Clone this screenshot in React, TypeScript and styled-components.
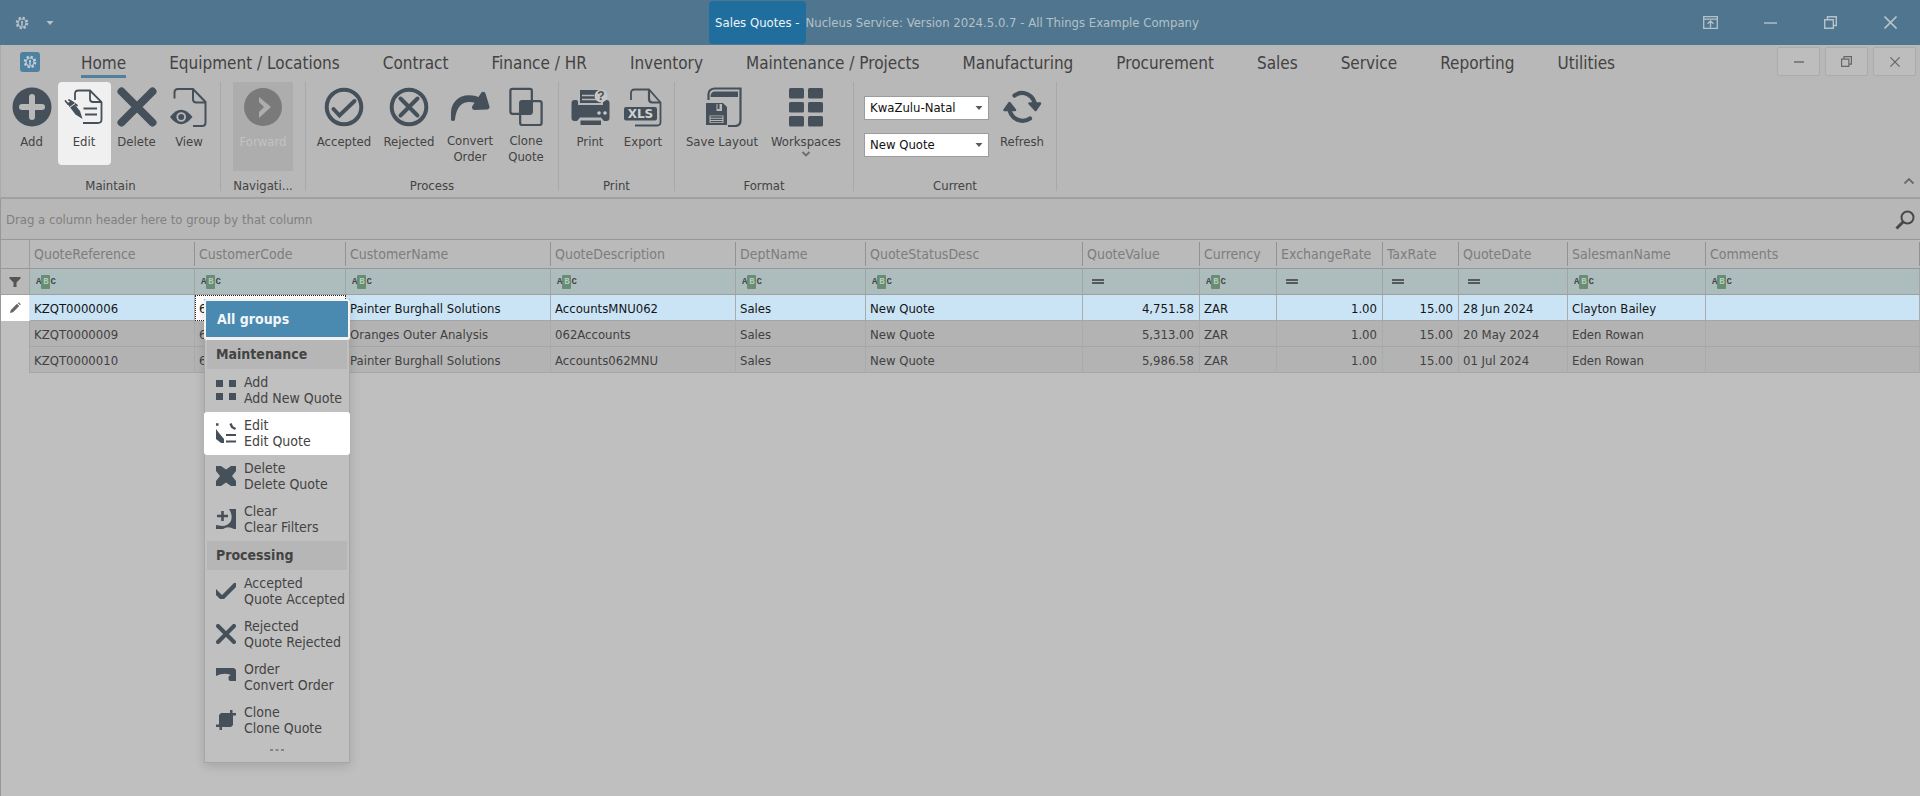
import React from "react";
import styled, { createGlobalStyle, css } from "styled-components";

const ink = "#46505a";
const ribbonBg = "#b8b8b8";

const GlobalStyle = createGlobalStyle`
  * { box-sizing: border-box; }
  html, body { margin: 0; background: #bfbfbf; }
  body, button, input, select {
    font-family: "DejaVu Sans Condensed", "DejaVu Sans", Tahoma, sans-serif;
    font-size: 13px;
    line-height: 16px;
    color: #434343;
  }
  button { border: 0; padding: 0; background: none; cursor: pointer; }
`;

const Window = styled.div`
  display: flex;
  flex-direction: column;
  min-height: 100vh;
`;

/* ---------- Title bar ---------- */

const TitleBar = styled.header`
  display: grid;
  grid-template-columns: 1fr auto 1fr;
  align-items: center;
  height: 45px;
  background: #50768f;
  color: #b4c0c8;
`;

const QuickAccess = styled.div`
  display: flex;
  align-items: center;
  gap: 17px;
  padding-left: 15px;
`;

const QuickButton = styled.button`
  display: flex;
  color: #b9c3ca;
`;

const Title = styled.h1`
  display: flex;
  align-items: center;
  margin: 0;
  padding-right: 12px;
  font-size: 13px;
  font-weight: 400;
  white-space: pre;
`;

const TitleDocument = styled.span`
  padding: 14px 6px 13px 6px;
  border-radius: 4px;
  background: #206e9e;
  color: #eef4f8;
`;

const WindowButtons = styled.div`
  display: flex;
  justify-content: flex-end;
`;

const WindowButton = styled.button`
  display: grid;
  place-items: center;
  width: 60px;
  height: 44px;
  color: #b6c2ca;
`;

/* ---------- Tabs ---------- */

const TabRow = styled.div`
  display: flex;
  align-items: flex-start;
  height: 37px;
  padding: 0 4px 0 20px;
  background: ${ribbonBg};
  border-left: 1px solid #ababab;
`;

const AppButton = styled.button`
  display: grid;
  place-items: center;
  width: 20px;
  height: 20px;
  margin: 7px 41px 0 -1px;
  border-radius: 3px;
  background: #50809f;
  color: #c3d0d8;
`;

const Tabs = styled.nav`
  display: flex;
  flex: 1;
  gap: 43px;
  padding-top: 8px;
`;

const Tab = styled.button<{ $active?: boolean }>`
  height: 25px;
  font-size: 17px;
  line-height: 20px;
  padding-bottom: 2px;
  white-space: nowrap;
  border-bottom: 3px solid ${(p) => (p.$active ? "#50809c" : "transparent")};
`;

const ChildButtons = styled.div`
  display: flex;
  gap: 5px;
  padding-top: 2px;
`;

const ChildButton = styled.button`
  display: grid;
  place-items: center;
  width: 43px;
  height: 29px;
  border: 1px solid #ababab;
  border-radius: 2px;
  background: #bdbdbd;
  color: #666;
`;

/* ---------- Ribbon ---------- */

const Ribbon = styled.section`
  display: flex;
  height: 117px;
  padding-bottom: 6px;
  background: ${ribbonBg};
  border-left: 1px solid #ababab;
  border-bottom: 2px solid #a0a0a0;
`;

const GroupBox = styled.div<{ $width: number }>`
  display: flex;
  flex-direction: column;
  justify-content: space-between;
  width: ${(p) => p.$width}px;
  border-right: 1px solid #a8a8a8;
`;

const GroupBody = styled.div`
  display: flex;
  justify-content: center;
`;

const GroupCaption = styled.div`
  text-align: center;
  line-height: 10px;
`;

const RibbonButton = styled.button<{ $width: number; $state?: "lit" | "disabled" }>`
  display: flex;
  flex-direction: column;
  align-items: center;
  width: ${(p) => p.$width}px;
  height: 83px;
  padding-top: 5px;
  white-space: pre-line;
  border-radius: 4px;
  color: ${(p) => (p.$state === "disabled" ? "#c2c2c2" : "#434343")};
  background: ${(p) => (p.$state === "lit" ? "#f0f0f0" : "none")};
  ${(p) =>
    p.$state === "disabled" &&
    css`
      height: 89px;
      border-radius: 0;
      background: #adadad;
    `}
`;

const ButtonText = styled.span`
  margin-top: 7px;
  line-height: 16px;
`;

const ComboColumn = styled.div`
  display: flex;
  flex-direction: column;
  gap: 13px;
  width: 125px;
  margin-left: 9px;
  padding-top: 14px;
`;

const ComboFrame = styled.div`
  display: grid;
  align-items: center;
  height: 24px;
  border: 1px solid #9c9c9c;
  background: #fff;
  color: #5a5a5a;
  > * { grid-area: 1 / 1; }
  > svg { justify-self: end; margin-right: 5px; pointer-events: none; }
`;

const Combo = styled.select`
  appearance: none;
  width: 100%;
  height: 22px;
  padding: 0 16px 0 5px;
  border: 0;
  background: transparent;
  color: #111;
`;

const CollapseButton = styled.button`
  align-self: flex-end;
  margin-left: auto;
  padding: 0 5px 2px;
  color: #6a6a6a;
`;

/* ---------- Grid ---------- */

const GridSection = styled.main`
  position: relative;
  flex: 1;
  border-left: 1px solid #989898;
`;

const GroupPanel = styled.div`
  display: flex;
  align-items: center;
  justify-content: space-between;
  height: 41px;
  padding: 1px 5px 0 5px;
  background: #b7b7b7;
  border-bottom: 1px solid #989898;
  color: #808080;
`;

const SearchButton = styled.button`
  display: flex;
  color: #484848;
`;

const Grid = styled.table`
  width: 100%;
  table-layout: fixed;
  border-collapse: separate;
  border-spacing: 0;
  white-space: nowrap;
`;

const HeaderCell = styled.th`
  height: 29px;
  padding: 0 4px;
  text-align: left;
  font-size: 14px;
  font-weight: 400;
  color: #7d7d7d;
  border-bottom: 1px solid #989898;
  background: linear-gradient(#929292, #929292) right center / 1px 24px no-repeat #bababa;
`;

const CornerCell = styled(HeaderCell)`
  background: #bababa;
  border-right: 1px solid #9c9c9c;
`;

const FilterCell = styled.td`
  height: 26px;
  padding: 0 4px 0 6px;
  background: #adbdbd;
  border-right: 1px solid #a0a6a6;
  border-bottom: 1px solid #a0a0a0;
`;

const FilterMarkCell = styled(FilterCell)`
  padding: 0;
  background: #b9b9b9;
  text-align: center;
  > svg { display: block; margin: 0 auto; }
`;

const FilterRow = styled.div`
  display: flex;
  align-items: center;
  height: 25px;
`;

const FilterInput = styled.input`
  flex: 1;
  min-width: 0;
  height: 20px;
  border: 0;
  background: transparent;
`;

const AbcMark = styled.span`
  display: flex;
  align-items: center;
  height: 14px;
  font: bold 9px/14px "Liberation Mono", monospace;
  color: #3f4745;
  b {
    width: 9px;
    border-radius: 1px;
    background: #688c74;
    color: #b5cdbb;
    text-align: center;
  }
`;

const EqualMark = styled.span`
  width: 12px;
  height: 5px;
  margin-left: 3px;
  border: solid #555b5b;
  border-width: 2px 0;
`;

const BodyRow = styled.tr<{ $selected?: boolean }>`
  background: ${(p) => (p.$selected ? "#cae4f6" : "#b3b3b3")};
  color: ${(p) => (p.$selected ? "#151515" : "#414141")};
`;

const Cell = styled.td<{ $right?: boolean; $focused?: boolean }>`
  height: 26px;
  padding: 2px 5px 0 4px;
  overflow: hidden;
  text-align: ${(p) => (p.$right ? "right" : "left")};
  border-right: 1px solid #a7abad;
  border-bottom: 1px solid #a6a6a6;
  ${(p) =>
    p.$focused &&
    css`
      padding: 1px 5px 0 3px;
      background: #fff;
      border: 1px dotted #222;
    `}
`;

const IndicatorCell = styled.td<{ $selected?: boolean }>`
  padding: 0;
  background: ${(p) => (p.$selected ? "#fff" : "#bfbfbf")};
  border-right: 1px solid ${(p) => (p.$selected ? "#dde6ec" : "#a6a6a6")};
  > svg { display: block; margin: 0 auto; }
`;

/* ---------- Context menu ---------- */

const Menu = styled.div`
  position: absolute;
  left: 203px;
  top: 100px;
  display: flex;
  flex-direction: column;
  width: 146px;
  background: #c0c0c0;
  border: 1px solid #a6a6a6;
  border-top: 0;
  box-shadow: 0 3px 10px rgba(0, 0, 0, 0.14);
`;

const AllGroups = styled.button`
  height: 41px;
  margin: 0 -1px;
  padding: 0 11px;
  text-align: left;
  font-size: 14px;
  font-weight: 700;
  color: #f2f6f9;
  background: #4b8ab0;
  border: solid #f2f2f2;
  border-width: 2px 2px 3px;
  border-radius: 3px;
`;

const MenuHeading = styled.h2`
  display: flex;
  align-items: center;
  height: 29px;
  margin: 0 2px;
  padding: 0 0 2px 9px;
  font-size: 14px;
  font-weight: 700;
  background: #b6b6b6;
`;

const MenuItem = styled.button<{ $lit?: boolean }>`
  display: flex;
  align-items: center;
  gap: 8px;
  height: 43px;
  margin: 0 -1px;
  padding: 0 0 2px 12px;
  text-align: left;
  border-radius: 3px;
  background: ${(p) => (p.$lit ? "#fff" : "none")};
  > svg { flex: none; }
`;

const MenuLines = styled.span`
  display: flex;
  flex-direction: column;
  font-size: 14px;
  line-height: 16px;
  white-space: nowrap;
`;

const MoreButton = styled.button`
  display: grid;
  place-items: center;
  height: 20px;
  padding-bottom: 4px;
  color: #858585;
`;

/* ---------- Icons ---------- */

const Svg = ({ w = 40, h = w, children }: { w?: number; h?: number; children: React.ReactNode }) => (
  <svg width={w} height={h} viewBox={`0 0 ${w} ${h}`} fill="none" aria-hidden="true">
    {children}
  </svg>
);

const Gear = () => (
  <Svg w={14}>
    <circle cx="7" cy="7" r="5.3" stroke="currentColor" strokeWidth="2" strokeDasharray="2.3 1.86" />
    <circle cx="7" cy="7" r="4" stroke="currentColor" strokeWidth="1.2" />
    <circle cx="7" cy="6" r="1.1" fill="currentColor" />
    <path d="M7 6V10" stroke="currentColor" strokeWidth="1.4" />
  </Svg>
);

const Caret = () => (
  <Svg w={8} h={4}>
    <path d="M0.5 0H7.5L4 4Z" fill="currentColor" />
  </Svg>
);

const Minimise = ({ w = 13 }: { w?: number }) => (
  <Svg w={w} h={2}>
    <path d={`M0 1H${w}`} stroke="currentColor" strokeWidth="1.4" />
  </Svg>
);

const Restore = ({ w = 13 }: { w?: number }) => (
  <svg width={w} height={w} viewBox="0 0 13 13" fill="none" stroke="currentColor" strokeWidth="1.4" aria-hidden="true">
    <path d="M0.7 3.7H9.3V12.3H0.7Z M3.5 3.5V0.7H12.3V9.5H9.5" />
  </svg>
);

const Close = ({ w = 13 }: { w?: number }) => (
  <svg width={w} height={w} viewBox="0 0 13 13" stroke="currentColor" strokeWidth="1.6" aria-hidden="true">
    <path d="M0.5 0.5L12.5 12.5M12.5 0.5L0.5 12.5" />
  </svg>
);

const RibbonOptions = () => (
  <Svg w={15} h={13}>
    <path d="M0.7 0.7H14.3V12.3H0.7Z M0.7 3.2H14.3 M7.5 11.5V5 M4.6 7.8L7.5 5L10.4 7.8" stroke="currentColor" strokeWidth="1.3" />
  </Svg>
);

const AddIcon = () => (
  <Svg>
    <circle cx="20" cy="20" r="19.5" fill={ink} />
    <path d="M20 10V30M10 20H30" stroke="#b8b8b8" strokeWidth="6" strokeLinecap="round" />
  </Svg>
);

const EditIcon = () => (
  <Svg>
    <g stroke={ink} strokeWidth="1.8">
      <path d="M11 13V7Q11 3.5 14.500 3.500H26L37.500 15V32.500Q37.500 36 34 36H19" />
      <path d="M26 3.500V12Q26 15 29 15H37.500" />
      <path d="M19.500 21.500H33M21 27.500H33" />
    </g>
    <path d="M3 16.500L7.500 13.500L16 24L18.500 32L11.500 27.500Z" fill={ink} />
    <path d="M1.500 14L4 17M5 13L9 15.500L13 18.500" stroke={ink} strokeWidth="1.800" strokeLinecap="round" />
    <path d="M5.500 20.500L11 16.500" stroke="#f0f0f0" strokeWidth="1" />
  </Svg>
);

const DeleteIcon = () => (
  <Svg>
    <path d="M4.500 4.500L35.500 35.500M35.500 4.500L4.500 35.500" stroke={ink} strokeWidth="8" strokeLinecap="round" />
  </Svg>
);

const ViewIcon = () => (
  <Svg>
    <g stroke={ink} strokeWidth="2">
      <path d="M5.500 11.500V5.500Q5.500 2 9 2H24L36.500 15V35.500Q36.500 39 33 39H24" />
      <path d="M24 2V12Q24 15.500 27.500 15.500H36.500" />
    </g>
    <path d="M1 30Q12 15.500 23.500 30Q12 44.500 1 30Z" fill={ink} />
    <circle cx="12.200" cy="30" r="3.900" stroke="#b8b8b8" strokeWidth="1.800" />
  </Svg>
);

const ForwardIcon = () => (
  <Svg>
    <circle cx="20" cy="20" r="19" fill="#7a7a7a" />
    <path d="M16 10V15L21 20L16 25V31L28 20Z" fill="#adadad" />
  </Svg>
);

const AcceptedIcon = () => (
  <Svg>
    <circle cx="20" cy="20" r="17.300" stroke={ink} strokeWidth="4" />
    <path d="M9.500 22L15.500 28.500L30.500 14" stroke={ink} strokeWidth="4" strokeLinecap="round" />
  </Svg>
);

const RejectedIcon = () => (
  <Svg>
    <circle cx="20" cy="20" r="17.300" stroke={ink} strokeWidth="4" />
    <path d="M11.500 11.500L28.500 28.500M28.500 11.500L11.500 28.500" stroke={ink} strokeWidth="4" strokeLinecap="round" />
  </Svg>
);

const ConvertIcon = () => (
  <Svg>
    <path d="M0.500 34V26C1 16 8 8.500 19 8.500C24 8.500 28 9.500 31 12L30 19C26 16 22 15 18 15.500C10 16.500 6 22 4.500 34Q2.500 35.500 0.500 34Z" fill={ink} />
    <path d="M33.500 7.500L37.500 20.500L24.500 21Z" fill={ink} stroke={ink} strokeWidth="5" strokeLinejoin="round" />
  </Svg>
);

const CloneIcon = () => (
  <Svg>
    <rect x="4" y="2" width="22" height="25.500" rx="2" stroke={ink} strokeWidth="2.300" />
    <rect x="14" y="14.500" width="22" height="24.500" rx="2" stroke={ink} strokeWidth="2.300" />
    <rect x="14" y="14.500" width="12" height="13" fill={ink} />
  </Svg>
);

const PrintIcon = () => (
  <Svg>
    <path d="M10 3H31V16H10Z" fill={ink} />
    <path d="M12 8.500H24M12 12.500H26" stroke="#b8b8b8" strokeWidth="1.400" />
    <path d="M1.500 16Q1.500 13 4.500 13H6.500Q8 13 8 15V18H33V15Q33 13 35 13H36.500Q39.500 13 39.500 16V31Q39.500 34 36.500 34H34L31 30.500H10L7 34H4.500Q1.500 34 1.500 31Z" fill={ink} />
    <path d="M10.500 33.500H31V38H10.500Z" fill={ink} />
    <circle cx="29" cy="26" r="1.800" fill="#c8c8c8" />
    <circle cx="35" cy="26" r="1.800" fill="#c8c8c8" />
    <circle cx="31" cy="9" r="6.500" fill="#c6c6c6" />
    <text x="31" y="13" textAnchor="middle" fontSize="12" fontWeight="700" fontFamily="Liberation Sans, sans-serif" fill="#4d4d4d">?</text>
  </Svg>
);

const ExportIcon = () => (
  <Svg>
    <path d="M8 13V6Q8 2.500 11.500 2.500H26L37.500 15.500V35Q37.500 38.500 34 38.500H12" stroke={ink} strokeWidth="1.800" />
    <path d="M26 2.500V12Q26 15.500 29.500 15.500H37.500" stroke={ink} strokeWidth="2.200" />
    <rect x="1" y="20" width="33" height="13.500" rx="2" fill={ink} />
    <text x="17.500" y="31" textAnchor="middle" fontSize="12" fontWeight="700" fontFamily="DejaVu Sans, sans-serif" fill="#d0d0d0">XLS</text>
  </Svg>
);

const SaveIcon = () => (
  <Svg>
    <path d="M6.500 13V7Q7 1.500 13 1.500H38.500V33Q38.500 39 33 39H26" stroke={ink} strokeWidth="2.200" />
    <path d="M8.500 10Q8.500 4.500 13 4.500H36V10Z" fill={ink} />
    <path d="M4 16H21L25 20V38H4Z" fill={ink} />
    <path d="M9 17V24H20V17Z" fill="#b8b8b8" />
    <path d="M9 16H14.500V24H9Z" fill={ink} />
    <path d="M16.500 17V22" stroke={ink} strokeWidth="2" />
    <path d="M7.500 28.500H21.500V36H7.500Z" fill="#b8b8b8" />
    <path d="M8.500 30H20.500M8.500 32.300H20.500M8.500 34.600H20.500" stroke={ink} strokeWidth="1.300" />
  </Svg>
);

const WorkspacesIcon = () => (
  <Svg>
    {[1, 15, 29].map((y) => (
      <React.Fragment key={y}>
        <rect x="3" y={y} width="15" height="10.500" rx="1.500" fill={ink} />
        <rect x="22" y={y} width="15" height="10.500" rx="1.500" fill={ink} />
      </React.Fragment>
    ))}
  </Svg>
);

const RefreshIcon = () => (
  <Svg>
    <path d="M12.500 8.500C21 2.500 32.500 8 33 19" stroke={ink} strokeWidth="4.200" strokeLinecap="round" />
    <path d="M28 31.500C19 37.500 7.500 31 7.500 20.500" stroke={ink} strokeWidth="4.200" strokeLinecap="round" />
    <path d="M27.500 16.500H38L33.500 23Z" fill={ink} stroke={ink} strokeWidth="2.500" strokeLinejoin="round" />
    <path d="M2.500 23H13L7.500 16Z" fill={ink} stroke={ink} strokeWidth="2.500" strokeLinejoin="round" />
  </Svg>
);

const Chevron = ({ up }: { up?: boolean }) => (
  <Svg w={12} h={8}>
    <path d={up ? "M1.500 6.500L6 2L10.500 6.500" : "M2.500 2L6 5.500L9.500 2"} stroke={up ? "currentColor" : "#6c6c6c"} strokeWidth="1.800" />
  </Svg>
);

const SearchIcon = () => (
  <Svg w={20}>
    <circle cx="12.500" cy="7.500" r="6" stroke="currentColor" strokeWidth="2" />
    <path d="M8.500 11.500L1.500 18.500" stroke="currentColor" strokeWidth="3" />
  </Svg>
);

const FunnelIcon = () => (
  <Svg w={12}>
    <path d="M0.500 1H11.500V2.500L7.500 6.500V11H4.500V6.500L0.500 2.500Z" fill="#555" />
  </Svg>
);

const PencilIcon = () => (
  <Svg w={12}>
    <path d="M1 11L1.800 8L8 1.800L10.200 4L4 10.200Z" fill="#666" />
    <path d="M8.800 1L9.800 0.200L11.800 2.200L11 3.200Z" fill="#666" />
  </Svg>
);

/* Menu icons are the centre of the large ones, cropped to a small square. */
const MenuAdd = () => (
  <Svg w={20}>
    <path d="M0 0H7V7H0ZM13 0H20V7H13ZM0 13H7V20H0ZM13 13H20V20H13Z" fill={ink} />
  </Svg>
);
const MenuEdit = () => (
  <Svg w={20}>
    <path d="M0 6L3 10L8 16V20H5L0 16Z" fill={ink} />
    <path d="M0 1.500H2.500M14.500 0.500L16 4L19.500 6" stroke={ink} strokeWidth="2.400" />
    <path d="M10 12H20M10 18.500H20" stroke={ink} strokeWidth="2" />
  </Svg>
);
const MenuDelete = () => (
  <Svg w={20}>
    <path d="M0 0H5L10 3.500L15 0H20V5L16 10L20 15V20H15L10 16.500L5 20H0V15L4 10L0 5Z" fill={ink} />
  </Svg>
);
const MenuClear = () => (
  <Svg w={20}>
    <path d="M6.500 2V12M1 7H12" stroke={ink} strokeWidth="2.600" />
    <path d="M13 0H20V20H0V16L6 17Q12 17 15 12Q17 6 13 0Z" fill={ink} />
    <path d="M7 20Q12 16.500 18 20Z" fill="#c0c0c0" />
  </Svg>
);
const MenuAccept = () => (
  <Svg w={20}>
    <path d="M0 8L6 14L18 2H20V6L8 18H4L0 14Z" fill={ink} />
  </Svg>
);
const MenuReject = () => (
  <Svg w={20}>
    <path d="M2 2L18 18M18 2L2 18" stroke={ink} strokeWidth="4" strokeLinecap="round" />
  </Svg>
);
const MenuOrder = () => (
  <Svg w={20}>
    <path d="M0 1H18L20 3V14H14Q12 13 12.500 10Q13 8.500 15 8Q8 5 0 9Z" fill={ink} />
  </Svg>
);
const MenuClone = () => (
  <Svg w={20}>
    <path d="M5 3H14V0H16.500V3H20V5.500H17V15L15 17H6V20H3.500V17H0V14.500H3V5Z" fill={ink} />
  </Svg>
);

/* ---------- Data ---------- */

const tabs = [
  "Home", "Equipment / Locations", "Contract", "Finance / HR", "Inventory", "Maintenance / Projects",
  "Manufacturing", "Procurement", "Sales", "Service", "Reporting", "Utilities",
];

type Column = { name: string; width?: number; numeric?: boolean; equals?: boolean };

const columns: Column[] = [
  { name: "QuoteReference", width: 165 },
  { name: "CustomerCode", width: 151 },
  { name: "CustomerName", width: 205 },
  { name: "QuoteDescription", width: 185 },
  { name: "DeptName", width: 130 },
  { name: "QuoteStatusDesc", width: 217 },
  { name: "QuoteValue", width: 117, numeric: true, equals: true },
  { name: "Currency", width: 77 },
  { name: "ExchangeRate", width: 106, numeric: true, equals: true },
  { name: "TaxRate", width: 76, numeric: true, equals: true },
  { name: "QuoteDate", width: 109, equals: true },
  { name: "SalesmanName", width: 138 },
  { name: "Comments" },
];

const rows = [
  ["KZQT0000006", "6", "Painter Burghall Solutions", "AccountsMNU062", "Sales", "New Quote", "4,751.58", "ZAR", "1.00", "15.00", "28 Jun 2024", "Clayton Bailey", ""],
  ["KZQT0000009", "6", "Oranges Outer Analysis", "062Accounts", "Sales", "New Quote", "5,313.00", "ZAR", "1.00", "15.00", "20 May 2024", "Eden Rowan", ""],
  ["KZQT0000010", "6", "Painter Burghall Solutions", "Accounts062MNU", "Sales", "New Quote", "5,986.58", "ZAR", "1.00", "15.00", "01 Jul 2024", "Eden Rowan", ""],
];

const maintenance = [
  { title: "Add", detail: "Add New Quote", Icon: MenuAdd },
  { title: "Edit", detail: "Edit Quote", Icon: MenuEdit, lit: true },
  { title: "Delete", detail: "Delete Quote", Icon: MenuDelete },
  { title: "Clear", detail: "Clear Filters", Icon: MenuClear },
];

const processing = [
  { title: "Accepted", detail: "Quote Accepted", Icon: MenuAccept },
  { title: "Rejected", detail: "Quote Rejected", Icon: MenuReject },
  { title: "Order", detail: "Convert Order", Icon: MenuOrder },
  { title: "Clone", detail: "Clone Quote", Icon: MenuClone },
];

/* ---------- Composite parts ---------- */

type ToolProps = { icon: React.ReactNode; label: string; width: number; state?: "lit" | "disabled"; drop?: boolean };

const Tool = ({ icon, label, width, state, drop }: ToolProps) => (
  <RibbonButton $width={width} $state={state} disabled={state === "disabled"}>
    {icon}
    <ButtonText>{label}</ButtonText>
    {drop && <Chevron />}
  </RibbonButton>
);

const Group = ({ caption, width, children }: { caption: string; width: number; children: React.ReactNode }) => (
  <GroupBox $width={width}>
    <GroupBody>{children}</GroupBody>
    <GroupCaption>{caption}</GroupCaption>
  </GroupBox>
);

const DropDown = ({ label, value }: { label: string; value: string }) => (
  <ComboFrame>
    <Combo aria-label={label} defaultValue={value}>
      <option>{value}</option>
    </Combo>
    <Caret />
  </ComboFrame>
);

const MenuItems = ({ items }: { items: { title: string; detail: string; Icon: React.FC; lit?: boolean }[] }) => (
  <>
    {items.map(({ title, detail, Icon, lit }) => (
      <MenuItem key={title} $lit={lit}>
        <Icon />
        <MenuLines>
          <span>{title}</span>
          <span>{detail}</span>
        </MenuLines>
      </MenuItem>
    ))}
  </>
);

export default function App() {
  return (
    <Window>
      <GlobalStyle />
      <TitleBar>
        <QuickAccess>
          <QuickButton aria-label="Application"><Gear /></QuickButton>
          <QuickButton aria-label="Customise toolbar"><Caret /></QuickButton>
        </QuickAccess>
        <Title>
          <TitleDocument>Sales Quotes -</TitleDocument>
          <span>Nucleus Service: Version 2024.5.0.7 - All Things Example Company</span>
        </Title>
        <WindowButtons>
          <WindowButton aria-label="Ribbon display"><RibbonOptions /></WindowButton>
          <WindowButton aria-label="Minimise"><Minimise /></WindowButton>
          <WindowButton aria-label="Restore"><Restore /></WindowButton>
          <WindowButton aria-label="Close"><Close /></WindowButton>
        </WindowButtons>
      </TitleBar>

      <TabRow>
        <AppButton aria-label="Application menu"><Gear /></AppButton>
        <Tabs>
          {tabs.map((name, i) => (
            <Tab key={name} $active={i === 0}>{name}</Tab>
          ))}
        </Tabs>
        <ChildButtons>
          <ChildButton aria-label="Minimise document"><Minimise w={10} /></ChildButton>
          <ChildButton aria-label="Restore document"><Restore w={11} /></ChildButton>
          <ChildButton aria-label="Close document"><Close w={10} /></ChildButton>
        </ChildButtons>
      </TabRow>

      <Ribbon>
        <Group caption="Maintain" width={220}>
          <Tool icon={<AddIcon />} label="Add" width={52} />
          <Tool icon={<EditIcon />} label="Edit" width={53} state="lit" />
          <Tool icon={<DeleteIcon />} label="Delete" width={52} />
          <Tool icon={<ViewIcon />} label="View" width={53} />
        </Group>
        <Group caption="Navigati..." width={85}>
          <Tool icon={<ForwardIcon />} label="Forward" width={60} state="disabled" />
        </Group>
        <Group caption="Process" width={253}>
          <Tool icon={<AcceptedIcon />} label="Accepted" width={66} />
          <Tool icon={<RejectedIcon />} label="Rejected" width={64} />
          <Tool icon={<ConvertIcon />} label={"Convert\nOrder"} width={58} />
          <Tool icon={<CloneIcon />} label={"Clone\nQuote"} width={54} />
        </Group>
        <Group caption="Print" width={116}>
          <Tool icon={<PrintIcon />} label="Print" width={53} />
          <Tool icon={<ExportIcon />} label="Export" width={53} />
        </Group>
        <Group caption="Format" width={179}>
          <Tool icon={<SaveIcon />} label="Save Layout" width={84} />
          <Tool icon={<WorkspacesIcon />} label="Workspaces" width={84} drop />
        </Group>
        <Group caption="Current" width={203}>
          <ComboColumn>
            <DropDown label="Region" value="KwaZulu-Natal" />
            <DropDown label="Status" value="New Quote" />
          </ComboColumn>
          <Tool icon={<RefreshIcon />} label="Refresh" width={66} />
        </Group>
        <CollapseButton aria-label="Collapse ribbon"><Chevron up /></CollapseButton>
      </Ribbon>

      <GridSection>
        <GroupPanel>
          <span>Drag a column header here to group by that column</span>
          <SearchButton aria-label="Search"><SearchIcon /></SearchButton>
        </GroupPanel>
        <Grid>
          <colgroup>
            <col width={29} />
            {columns.map((c) => (
              <col key={c.name} width={c.width} />
            ))}
          </colgroup>
          <thead>
            <tr>
              <CornerCell aria-label="Row state" />
              {columns.map((c) => (
                <HeaderCell key={c.name} scope="col">{c.name}</HeaderCell>
              ))}
            </tr>
          </thead>
          <tbody>
            <tr>
              <FilterMarkCell><FunnelIcon /></FilterMarkCell>
              {columns.map((c) => (
                <FilterCell key={c.name}>
                  <FilterRow>
                    {c.equals ? <EqualMark /> : <AbcMark>A<b>B</b>C</AbcMark>}
                    <FilterInput aria-label={`Filter ${c.name}`} />
                  </FilterRow>
                </FilterCell>
              ))}
            </tr>
            {rows.map((row, r) => (
              <BodyRow key={row[0]} $selected={r === 0}>
                <IndicatorCell $selected={r === 0}>{r === 0 && <PencilIcon />}</IndicatorCell>
                {row.map((value, c) => (
                  <Cell key={columns[c].name} $right={columns[c].numeric} $focused={r === 0 && c === 1}>
                    {value}
                  </Cell>
                ))}
              </BodyRow>
            ))}
          </tbody>
        </Grid>

        <Menu>
          <AllGroups>All groups</AllGroups>
          <MenuHeading>Maintenance</MenuHeading>
          <MenuItems items={maintenance} />
          <MenuHeading>Processing</MenuHeading>
          <MenuItems items={processing} />
          <MoreButton aria-label="More">
            <Svg w={14} h={2}>
              <path d="M0 1H3M5.500 1H8.500M11 1H14" stroke="currentColor" strokeWidth="2" />
            </Svg>
          </MoreButton>
        </Menu>
      </GridSection>
    </Window>
  );
}
